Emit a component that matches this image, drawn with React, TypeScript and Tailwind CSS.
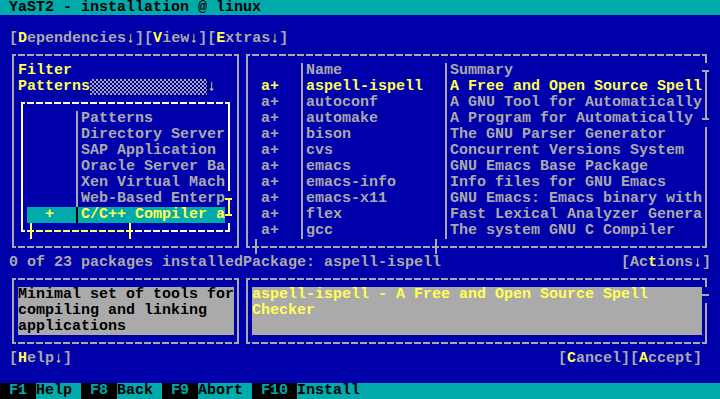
import React from "react";

type Tone = "gray" | "white";

const edge: Record<Tone, string> = {
  gray: "border-[#aaaaaa]",
  white: "border-[#ffffff]",
};

const dash: Record<Tone, string> = {
  gray: "bg-[repeating-linear-gradient(90deg,#aaaaaa_0_2px,transparent_2px_4px,#aaaaaa_4px_9px)]",
  white: "bg-[repeating-linear-gradient(90deg,#ffffff_0_2px,transparent_2px_4px,#ffffff_4px_9px)]",
};

const patterns = [
  "Directory Server",
  "SAP Application ",
  "Oracle Server Ba",
  "Xen Virtual Mach",
  "Web-Based Enterp",
];

const packages = [
  ["aspell-ispell", "A Free and Open Source Spell"],
  ["autoconf", "A GNU Tool for Automatically"],
  ["automake", "A Program for Automatically"],
  ["bison", "The GNU Parser Generator"],
  ["cvs", "Concurrent Versions System"],
  ["emacs", "GNU Emacs Base Package"],
  ["emacs-info", "Info files for GNU Emacs"],
  ["emacs-x11", "GNU Emacs: Emacs binary with"],
  ["flex", "Fast Lexical Analyzer Genera"],
  ["gcc", "The system GNU C Compiler"],
];

function Hot({ children }: { children: React.ReactNode }) {
  return <span className="text-[#ffff55]">{children}</span>;
}

function Btn({ pre = "", hot, rest, arrow }: { pre?: string; hot: string; rest: string; arrow?: boolean }) {
  return (
    <span className="text-[#aaaaaa]">
      [{pre}
      <Hot>{hot}</Hot>
      {rest}
      {arrow && <Hot>↓</Hot>}]
    </span>
  );
}

function Frame({
  size,
  tone = "gray",
  children,
  extra,
}: {
  size: string;
  tone?: Tone;
  children: React.ReactNode;
  extra?: React.ReactNode;
}) {
  return (
    <div className={`${size} shrink-0 pt-[7px] pb-[7px] pl-[3px] pr-[4px]`}>
      <div className={`relative flex h-full flex-col border-x-2 ${edge[tone]}`}>
        <div className={`h-[2px] shrink-0 ${dash[tone]}`} />
        <div className="flex-1 pl-[4px] pt-[7px]">{children}</div>
        <div className={`h-[2px] shrink-0 ${dash[tone]}`} />
        {extra}
      </div>
    </div>
  );
}

function Sep({ line }: { line: string }) {
  return (
    <div className="h-[16px] w-[9px] shrink-0 pl-[4px]">
      <div className={`h-full w-[2px] ${line}`} />
    </div>
  );
}

function PatternList() {
  return (
    <div className="flex flex-col">
      <div className="flex h-[16px] text-[#aaaaaa]">
        <div className="w-[45px]" />
        <Sep line="bg-[#aaaaaa]" />
        <div className="w-[144px] whitespace-pre">Patterns</div>
      </div>
      {patterns.map((p) => (
        <div key={p} className="flex h-[16px] text-[#aaaaaa]">
          <div className="w-[45px]" />
          <Sep line="bg-[#aaaaaa]" />
          <div className="w-[144px] whitespace-pre">{p}</div>
        </div>
      ))}
      <div className="flex h-[16px] w-[198px] bg-[#00aaaa] text-[#ffff55]">
        <div className="w-[45px] whitespace-pre">  +  </div>
        <Sep line="bg-black" />
        <div className="w-[144px] whitespace-pre">C/C++ Compiler a</div>
      </div>
    </div>
  );
}

function PackageTable() {
  return (
    <div className="flex flex-col">
      <div className="flex h-[16px] text-[#aaaaaa]">
        <div className="w-[45px]" />
        <Sep line="bg-[#aaaaaa]" />
        <div className="w-[135px] whitespace-pre">Name</div>
        <Sep line="bg-[#aaaaaa]" />
        <div className="w-[252px] whitespace-pre">Summary</div>
      </div>
      {packages.map(([name, summary], i) => (
        <div key={name} className={`flex h-[16px] ${i === 0 ? "text-[#ffff55]" : "text-[#aaaaaa]"}`}>
          <div className="w-[45px] whitespace-pre"> a+  </div>
          <Sep line="bg-[#aaaaaa]" />
          <div className="w-[135px] overflow-hidden whitespace-pre">{name}</div>
          <Sep line="bg-[#aaaaaa]" />
          <div className="w-[252px] overflow-hidden whitespace-pre">{summary}</div>
        </div>
      ))}
    </div>
  );
}

export default function App() {
  return (
    <div className="h-[399px] w-[720px] overflow-hidden bg-[#0000aa] font-['Liberation_Mono','DejaVu_Sans_Mono',monospace] text-[15px] leading-[16px] font-bold">
      <div className="flex flex-col">
        <div className="h-[15px] whitespace-pre bg-[#00aaaa] leading-[15px] text-black"> YaST2 - installation @ linux</div>
        <div className="h-[16px]" />
        <div className="flex h-[16px] whitespace-pre pl-[9px]">
          <Btn hot="D" rest="ependencies" arrow />
          <Btn hot="V" rest="iew" arrow />
          <Btn hot="E" rest="xtras" arrow />
        </div>

        <div className="flex h-[208px] pl-[9px]">
          <Frame size="w-[234px] h-[208px]">
            <div className="flex h-[16px] text-[#ffff55]">Filter</div>
            <div className="flex h-[16px] text-[#ffff55]">
              <span className="w-[72px]">Patterns</span>
              <span className="h-[16px] w-[117px] bg-[repeating-conic-gradient(#aaaaaa_0_25%,#0000aa_0_50%)] bg-[length:4px_4px]" />
              <span>↓</span>
            </div>
            <Frame
              size="w-[216px] h-[144px]"
              tone="white"
              extra={
                <>
                  <div className="absolute right-[-4px] top-[89px] h-[32px] w-[7px] bg-[#0000aa]" />
                  <div className="absolute right-[-2px] top-[96px] h-[18px] w-[2px] bg-[#ffff55]" />
                  <div className="absolute right-[-4px] top-[96px] h-[2px] w-[7px] bg-[#ffff55]" />
                  <div className="absolute right-[-4px] top-[112px] h-[2px] w-[7px] bg-[#ffff55]" />
                  <div className="absolute bottom-0 left-[8px] h-[2px] w-[100px] bg-[#0000aa] bg-[repeating-linear-gradient(90deg,#ffff55_0_3px,transparent_3px_5px,#ffff55_5px_9px)]" />
                  <div className="absolute left-[7px] top-[121px] h-[16px] w-[2px] bg-[#ffff55]" />
                  <div className="absolute left-[106px] top-[121px] h-[16px] w-[2px] bg-[#ffff55]" />
                </>
              }
            >
              <PatternList />
            </Frame>
          </Frame>

          <Frame
            size="w-[468px] h-[208px]"
            extra={
              <>
                <div className="absolute right-[-4px] top-[9px] h-[64px] w-[7px] bg-[#0000aa]" />
                <div className="absolute right-[-2px] top-[16px] h-[50px] w-[2px] bg-[#aaaaaa]" />
                <div className="absolute right-[-4px] top-[16px] h-[2px] w-[7px] bg-[#aaaaaa]" />
                <div className="absolute right-[-4px] top-[64px] h-[2px] w-[7px] bg-[#aaaaaa]" />
                <div className="absolute left-[7px] top-[185px] h-[15px] w-[2px] bg-[#aaaaaa]" />
                <div className="absolute left-[187px] top-[185px] h-[15px] w-[2px] bg-[#aaaaaa]" />
              </>
            }
          >
            <PackageTable />
          </Frame>
        </div>

        <div className="flex h-[16px] whitespace-pre pl-[9px] pr-[9px] text-[#aaaaaa]">
          <span>0 of 23 packages installedPackage: aspell-ispell</span>
          <span className="ml-auto">
            <Btn pre="Ac" hot="t" rest="ions" arrow />
          </span>
        </div>

        <div className="flex h-[80px] pl-[9px]">
          <Frame size="w-[234px] h-[80px]">
            <div className="h-[48px] w-[216px] whitespace-pre bg-[#aaaaaa] text-black">
              <div className="h-[16px]">Minimal set of tools for</div>
              <div className="h-[16px]">compiling and linking</div>
              <div className="h-[16px]">applications</div>
            </div>
          </Frame>
          <Frame
            size="w-[468px] h-[80px]"
            extra={
              <>
                <div className="absolute right-[-4px] top-[9px] h-[16px] w-[7px] bg-[#0000aa]" />
                <div className="absolute right-[-4px] top-[16px] h-[2px] w-[7px] bg-[#aaaaaa]" />
              </>
            }
          >
            <div className="h-[48px] w-[450px] whitespace-pre bg-[#aaaaaa] text-[#ffff55]">
              <div className="h-[16px]">aspell-ispell - A Free and Open Source Spell</div>
              <div className="h-[16px]">Checker</div>
            </div>
          </Frame>
        </div>

        <div className="flex h-[16px] whitespace-pre pl-[9px] pr-[18px]">
          <Btn hot="H" rest="elp" arrow />
          <span className="ml-auto">
            <Btn hot="C" rest="ancel" />
            <Btn hot="A" rest="ccept" />
          </span>
        </div>
        <div className="h-[16px]" />

        <div className="flex h-[16px] whitespace-pre">
          <span className="bg-black text-[#00aaaa]"> F1 </span>
          <span className="bg-[#00aaaa] text-black">Help </span>
          <span className="bg-black text-[#00aaaa]"> F8 </span>
          <span className="bg-[#00aaaa] text-black">Back </span>
          <span className="bg-black text-[#00aaaa]"> F9 </span>
          <span className="bg-[#00aaaa] text-black">Abort </span>
          <span className="bg-black text-[#00aaaa]"> F10 </span>
          <span className="flex-1 bg-[#00aaaa] text-black">Install</span>
        </div>
      </div>
    </div>
  );
}
